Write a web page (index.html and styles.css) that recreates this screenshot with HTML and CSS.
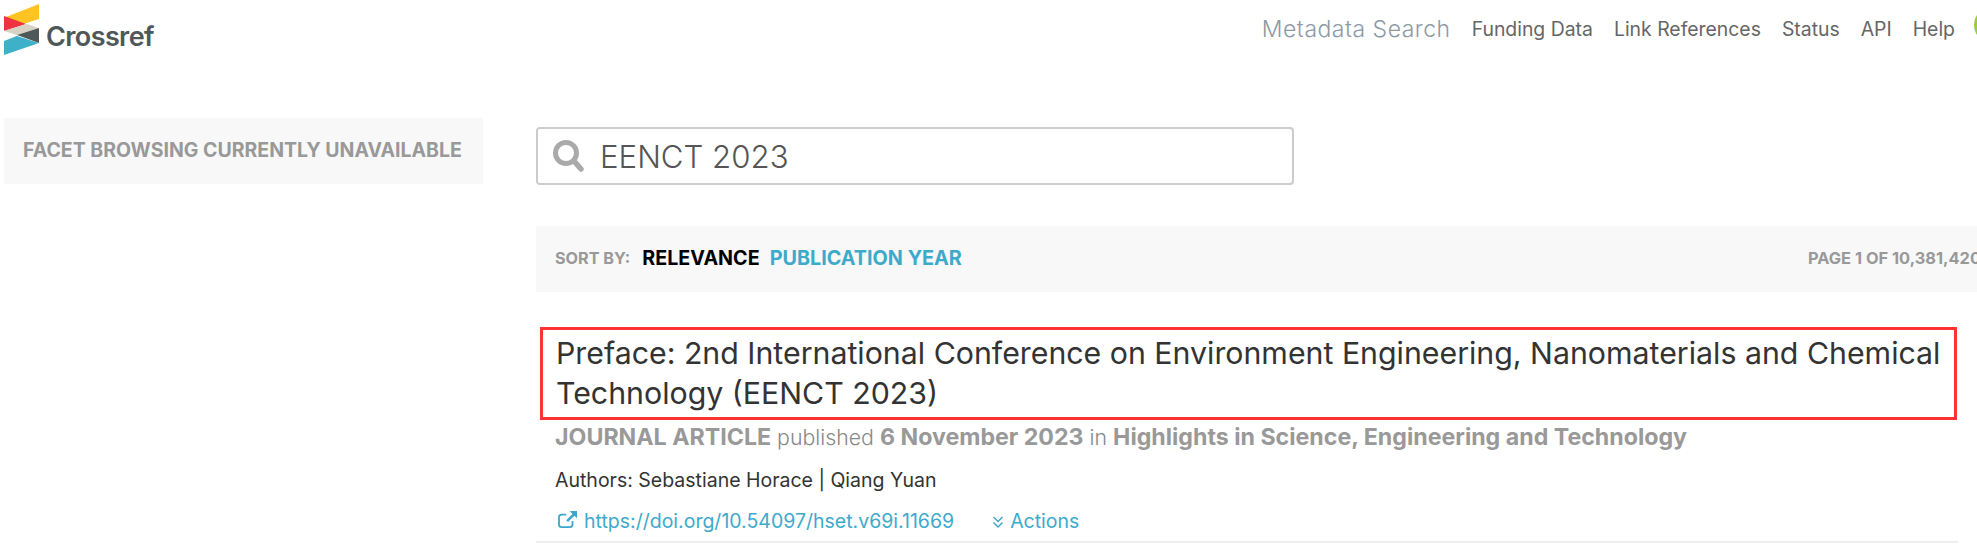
FILE: index.html
```html
<!DOCTYPE html>
<html lang="en">
<head>
<meta charset="utf-8">
<title>Crossref Metadata Search</title>
<link rel="stylesheet" href="styles.css">
</head>
<body>
<div class="page">
  <header class="top">
    <a class="logo">
      <svg class="logo-mark" width="36" height="52" viewBox="0 0 36 52">
        <polygon points="35,0 35,15 13,22 2,13" fill="#ffc423"/>
        <polygon points="0,12 22,20 0,27" fill="#ef3340"/>
        <polygon points="0,27 23,20 35,24 13,31" fill="#d8d2c4"/>
        <polygon points="35,24 35,39 13,31" fill="#4f5858"/>
        <polygon points="0,37 13,32 35,39 0,51" fill="#3eb1c8"/>
      </svg>
      <span class="logo-text">Crossref</span>
    </a>
    <nav class="nav">
      <a class="nav-main">Metadata Search</a>
      <a class="nav-link">Funding Data</a>
      <a class="nav-link">Link References</a>
      <a class="nav-link">Status</a>
      <a class="nav-link">API</a>
      <a class="nav-link">Help</a>
      <span class="avatar"></span>
    </nav>
  </header>
  <main class="layout">
    <aside class="side">
      <div class="facet">FACET BROWSING CURRENTLY UNAVAILABLE</div>
    </aside>
    <section class="content">
      <div class="search">
        <svg class="search-icon" width="34" height="34" viewBox="0 0 34 34">
          <circle cx="15" cy="14" r="10.5" fill="none" stroke="#aaa" stroke-width="5"/>
          <line x1="23" y1="22" x2="30" y2="30" stroke="#aaa" stroke-width="5.5" stroke-linecap="round"/>
        </svg>
        <span class="search-text">EENCT 2023</span>
      </div>
      <div class="sortbar">
        <span class="sort-label">SORT BY:</span>
        <a class="sort-active">RELEVANCE</a>
        <a class="sort-option">PUBLICATION YEAR</a>
        <span class="pager">PAGE 1 OF 10,381,420</span>
      </div>
      <article class="result">
        <h2 class="title">Preface: 2nd International Conference on Environment Engineering, Nanomaterials and Chemical Technology (EENCT 2023)</h2>
        <p class="meta"><b>JOURNAL ARTICLE</b> published <b>6 November 2023</b> in <b>Highlights in Science, Engineering and Technology</b></p>
        <p class="authors">Authors: Sebastiane Horace | Qiang Yuan</p>
        <div class="links">
          <a class="doi">
            <svg class="ext" width="20" height="18" viewBox="0 0 22 20">
              <path d="M16 11v4a3 3 0 0 1-3 3H4a3 3 0 0 1-3-3V7a3 3 0 0 1 3-3h5" fill="none" stroke="#3ea6cb" stroke-width="2"/>
              <path d="M13 0h8v8l-3-2.800-7 7-2-2 7-7z" fill="#3ea6cb"/>
            </svg>https://doi.org/10.54097/hset.v69i.11669</a>
          <a class="actions">
            <svg class="chev" width="12" height="14" viewBox="0 0 12 14">
              <path d="M1.500 2l4.500 4.500L10.500 2M1.500 7.500l4.500 4.500 4.500-4.500" fill="none" stroke="#3ea6cb" stroke-width="1.500"/>
            </svg>Actions</a>
        </div>
      </article>
    </section>
  </main>
</div>
</body>
</html>
```
FILE: styles.css
```css
html, body {
  margin: 0;
  height: 100%;
  overflow: hidden;
  background: #fff;
}
.page {
  width: 2040px;
  font-family: Inter, "Liberation Sans", sans-serif;
}
.top {
  display: flex;
  justify-content: space-between;
  height: 118px;
  padding: 4px 0 0 4px;
  box-sizing: border-box;
}
.logo {
  display: flex;
  align-items: flex-start;
}
.logo-mark { display: block; }
.logo-text {
  margin: 14px 0 0 6px;
  font-size: 27px;
  line-height: 38px;
  font-weight: 600;
  letter-spacing: -0.6px;
  color: #4f5858;
}
.nav {
  display: flex;
  align-items: center;
  gap: 21px;
  height: 50px;
  padding-right: 30px;
}
.nav-main {
  font-size: 23px;
  font-weight: 300;
  letter-spacing: 0.5px;
  color: #8d99a6;
}
.nav-link {
  font-size: 19.4px;
  color: #666;
}
.avatar {
  width: 36px;
  height: 36px;
  margin: -8px 0 0 -2px;
  border-radius: 50%;
  background: #9ccc3c;
}
.layout {
  display: flex;
  align-items: flex-start;
  gap: 53px;
  padding-left: 4px;
}
.side { width: 479px; flex: none; }
.facet {
  height: 66px;
  padding-left: 19px;
  background: #f8f8f8;
  font-size: 19.5px;
  font-weight: 700;
  line-height: 64px;
  color: #999;
  white-space: nowrap;
}
.content { flex: 1; min-width: 0; }
.search {
  display: flex;
  align-items: center;
  width: 758px;
  height: 58px;
  margin-top: 9px;
  box-sizing: border-box;
  border: 2px solid #ccc;
  border-radius: 4px;
  padding-left: 13px;
}
.search-icon { flex: none; }
.search-text {
  margin: 1px 0 0 15px;
  font-size: 31.2px;
  font-weight: 300;
  color: #555;
}
.sortbar {
  display: flex;
  align-items: center;
  height: 66px;
  margin-top: 41px;
  padding: 0 59px 2px 19px;
  box-sizing: border-box;
  background: #f8f8f8;
  font-weight: 700;
}
.sort-label {
  font-size: 16.2px;
  color: #999;
  margin-right: 12px;
}
.sort-active {
  font-size: 19.7px;
  color: #000;
  margin-right: 10px;
}
.sort-option {
  font-size: 19.8px;
  color: #3eaacb;
}
.pager {
  margin-left: auto;
  font-size: 16.4px;
  color: #999;
  white-space: nowrap;
}
.result {
  width: 1422px;
  height: 216px;
  box-sizing: border-box;
  margin-top: 35px;
  border-bottom: 2px solid #eee;
}
.title {
  margin: 0 0 0 4px;
  width: 1417px;
  height: 93px;
  box-sizing: border-box;
  border: 3px solid #f33;
  padding: 3px 13px 0;
  font-size: 30.3px;
  font-weight: 400;
  line-height: 40px;
  color: #333;
}
.meta {
  margin: 1px 0 0 19px;
  font-size: 21.3px;
  font-weight: 300;
  line-height: 32px;
  color: #888;
}
.meta b {
  font-size: 23.2px;
  font-weight: 700;
  color: #999;
}
.authors {
  margin: 13px 0 0 19px;
  font-size: 19.5px;
  line-height: 28px;
  color: #333;
}
.links {
  display: flex;
  gap: 38px;
  margin: 13px 0 0 22px;
  font-size: 19.5px;
  line-height: 28px;
  color: #3eaacb;
}
.ext { margin-right: 6px; vertical-align: -1px; }
.chev { margin-right: 6px; vertical-align: -1px; }
```
